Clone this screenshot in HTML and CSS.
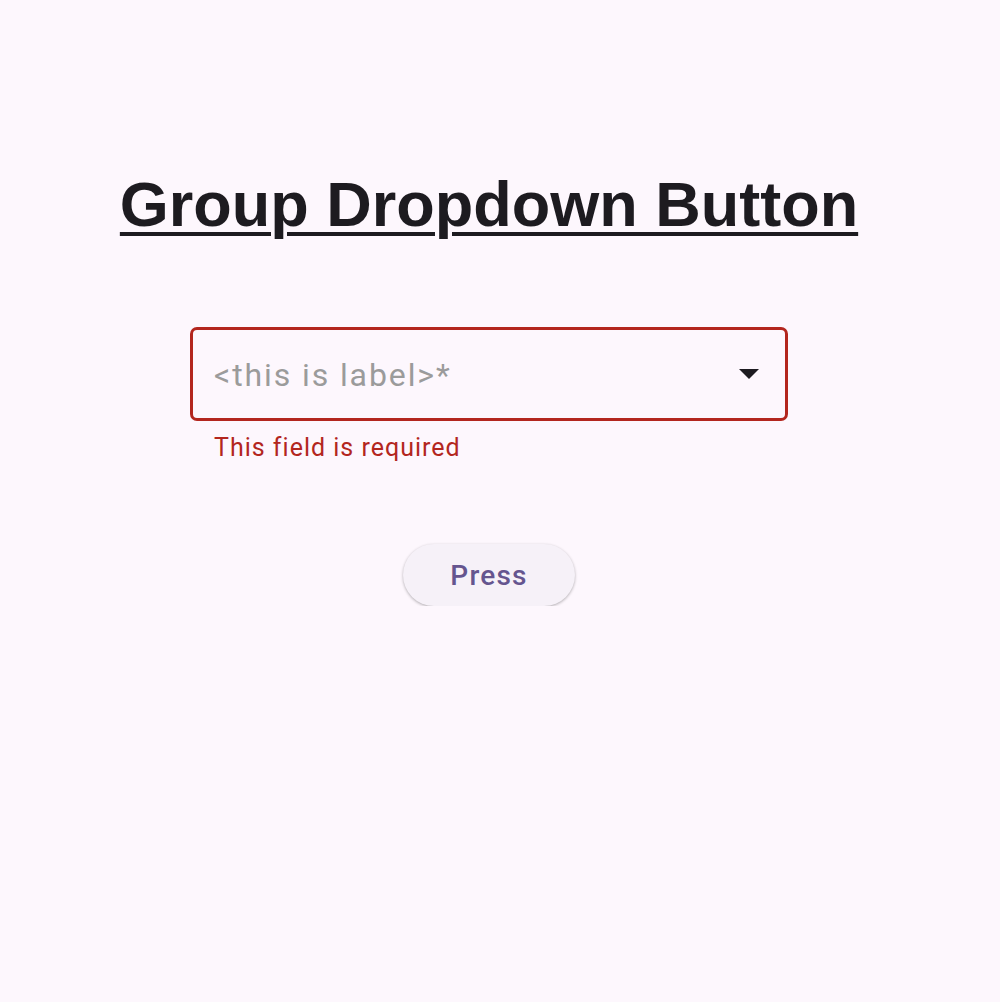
FILE: index.html
```html
<!DOCTYPE html>
<html lang="en">
<head>
    <meta charset="UTF-8">
    <meta name="viewport" content="width=device-width, initial-scale=1.0">
    <title>Group Dropdown Button</title>
    <link rel="stylesheet" href="styles.css">
</head>
<body>
    <div class="page">
        <h1 class="title">Group Dropdown Button</h1>
        <div class="field">
            <div class="dropdown">
                <span class="label">&lt;this is label&gt;*</span>
                <svg class="arrow" width="20" height="10" viewBox="0 0 20 10">
                    <path d="M0 0 L20 0 L10 10 Z" fill="#1d1b20"/>
                </svg>
            </div>
            <div class="error">This field is required</div>
        </div>
        <button class="press">Press</button>
    </div>
</body>
</html>
```

FILE: styles.css
```css
body {
    margin: 0;
    background: #fdf7fd;
    font-family: Roboto, "Liberation Sans", sans-serif;
}
.page {
    width: 978px;
    display: flex;
    flex-direction: column;
    align-items: center;
    padding-top: 168px;
}
.title {
    margin: 0;
    font-family: "Liberation Sans", Arial, sans-serif;
    font-weight: bold;
    font-size: 63px;
    line-height: 72px;
    color: #1d1b20;
    text-decoration: underline;
    text-decoration-thickness: 4px;
    text-underline-offset: 6px;
}
.field {
    margin-top: 87px;
    width: 598px;
}
.dropdown {
    box-sizing: border-box;
    height: 94px;
    border: 3px solid #b3261e;
    border-radius: 7px;
    display: flex;
    align-items: center;
    justify-content: space-between;
    padding: 2px 26px 0 21px;
}
.label {
    font-size: 32px;
    letter-spacing: 1.9px;
    color: #9b9b9b;
}
.arrow {
    display: block;
    margin-top: -2px;
}
.error {
    margin-top: 12px;
    padding-left: 24px;
    font-size: 25px;
    line-height: 30px;
    letter-spacing: 1px;
    color: #b3261e;
}
.press {
    margin-top: 81px;
    width: 172px;
    height: 62px;
    border: none;
    border-radius: 31px;
    background: #f6f1f8;
    box-shadow: 0 1px 3px rgba(0, 0, 0, 0.3);
    font-family: Roboto, sans-serif;
    font-weight: 500;
    font-size: 28px;
    letter-spacing: 1.2px;
    color: #65558f;
}
```
